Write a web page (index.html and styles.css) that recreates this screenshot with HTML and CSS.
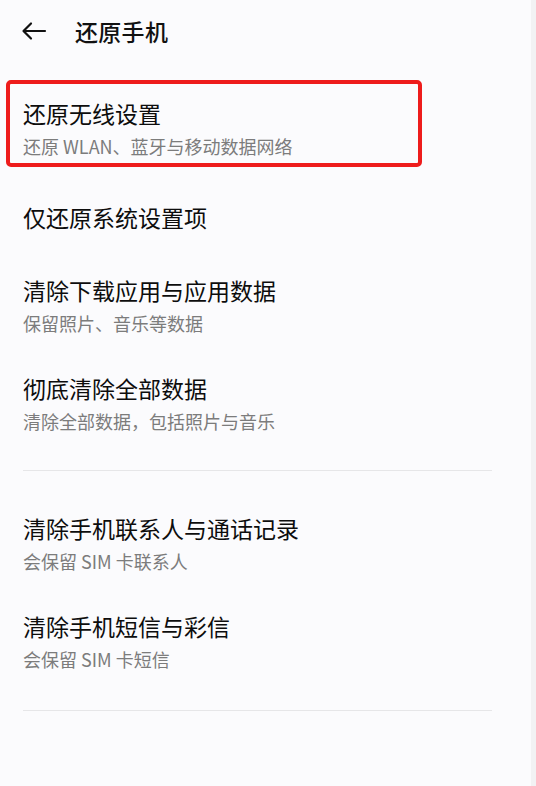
FILE: index.html
```html
<!DOCTYPE html>
<html lang="zh-CN">
<head>
  <meta charset="UTF-8" />
  <meta name="viewport" content="width=device-width, initial-scale=1.0"/>
  <title>还原手机</title>
  <link rel="stylesheet" href="styles.css">
</head>
<body>
  <div class="page">
    <header>
      <svg class="back" width="26" height="20" viewBox="0 0 26 20">
        <path d="M24 10H3M10 2.5L2.5 10L10 17.5" fill="none" stroke="#111" stroke-width="2.2" stroke-linecap="round" stroke-linejoin="round"/>
      </svg>
      <div class="title">还原手机</div>
    </header>

    <div class="list">
      <div class="item marked">
        <div class="item-title">还原无线设置</div>
        <div class="item-sub">还原 WLAN、蓝牙与移动数据网络</div>
      </div>
      <div class="item single">
        <div class="item-title">仅还原系统设置项</div>
      </div>
      <div class="item">
        <div class="item-title">清除下载应用与应用数据</div>
        <div class="item-sub">保留照片、音乐等数据</div>
      </div>
      <div class="item">
        <div class="item-title">彻底清除全部数据</div>
        <div class="item-sub">清除全部数据，包括照片与音乐</div>
      </div>
    </div>

    <div class="divider"></div>

    <div class="list second">
      <div class="item">
        <div class="item-title">清除手机联系人与通话记录</div>
        <div class="item-sub">会保留 SIM 卡联系人</div>
      </div>
      <div class="item">
        <div class="item-title">清除手机短信与彩信</div>
        <div class="item-sub">会保留 SIM 卡短信</div>
      </div>
    </div>

    <div class="divider"></div>
  </div>
</body>
</html>
```

FILE: styles.css
```css
* {
  margin: 0;
  padding: 0;
  box-sizing: border-box;
}
body {
  font-family: "Noto Sans CJK SC", "Noto Sans", sans-serif;
  background-color: #f2f2f4;
  color: #111;
}
.page {
  width: 531px;
  min-height: 786px;
  background-color: #fbfbfd;
  padding: 0 39px 0 23px;
}

header {
  display: flex;
  align-items: center;
  height: 62px;
}
header .back {
  margin-left: -2px;
  margin-right: 28px;
}
header .title {
  font-size: 23px;
  font-weight: 500;
  line-height: 30px;
  letter-spacing: 0.3px;
}

.list {
  padding-top: 17px;
}
.list.second {
  padding-top: 23px;
}

.item {
  padding: 19px 0;
}
.item.single {
  min-height: 73px;
}
.item.marked {
  position: relative;
  margin-bottom: 6px;
}
/* red annotation frame over the first row */
.item.marked::after {
  content: "";
  box-sizing: border-box;
  position: absolute;
  left: -17px;
  top: 1px;
  width: 416px;
  height: 87px;
  border: 4.5px solid #ee1c1c;
  border-radius: 5px;
}
.item-title {
  font-size: 23px;
  line-height: 30px;
  color: #0d0d0d;
}
.item-sub {
  margin-top: 6px;
  font-size: 18px;
  line-height: 24px;
  color: #7c7c7c;
}

.divider {
  height: 1px;
  background-color: #e6e6e8;
  margin-top: 18px;
}
.list.second + .divider {
  margin-top: 20px;
}
```
